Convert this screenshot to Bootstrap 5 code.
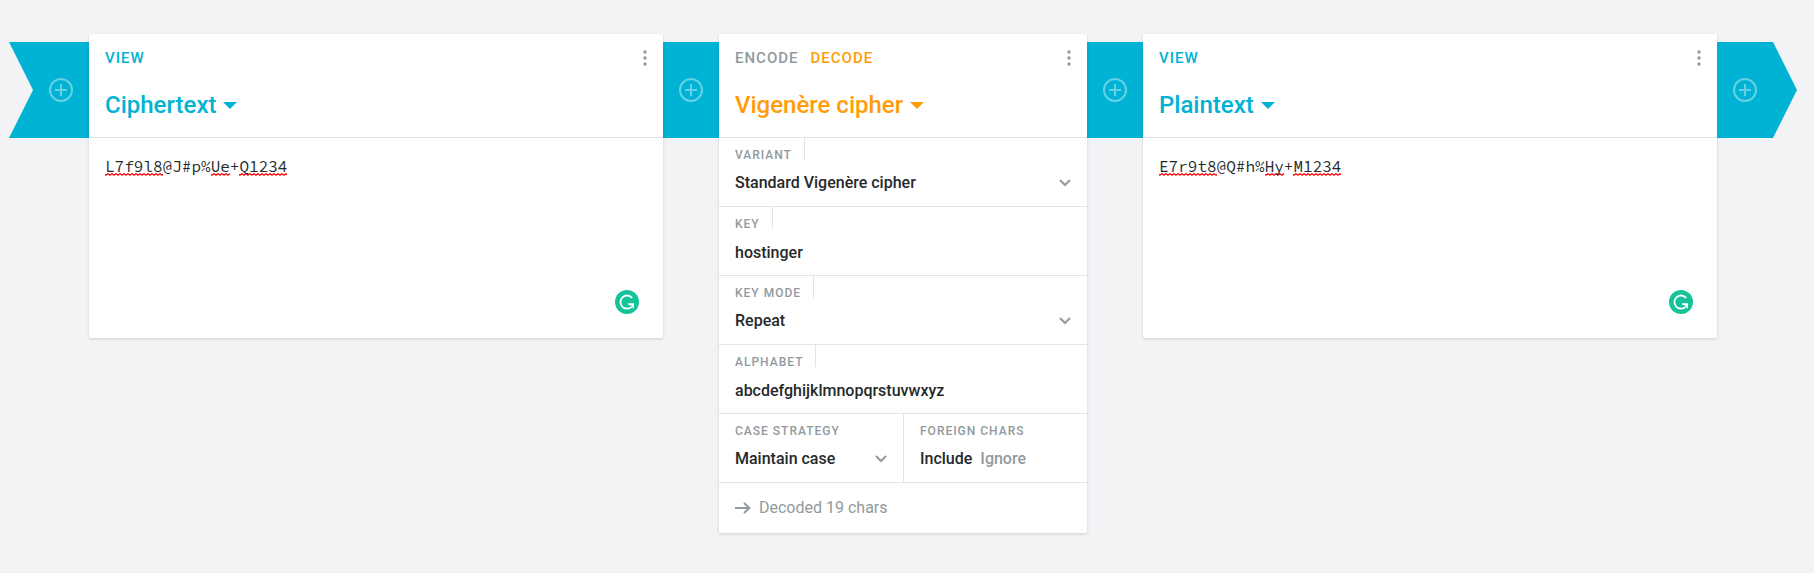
<!DOCTYPE html>
<html lang="en">
<head>
<meta charset="utf-8">
<meta name="viewport" content="width=device-width, initial-scale=1">
<title>Vigenère cipher</title>
<link href="https://cdn.jsdelivr.net/npm/bootstrap@5.3.0/dist/css/bootstrap.min.css" rel="stylesheet">
<style>
:root{--flow:#00b2d4;--accent:#ff9c07;--muted:#919a9e;--line:#e1e5e9}
body{background:#f2f3f5;font-family:Roboto,sans-serif;color:#26292b;font-size:16px;line-height:24px;min-height:573px;overflow:hidden}
.pipeline{padding:34px 17px 0 9px}
.brick{background:#fff;border-radius:2px;box-shadow:0 1px 3px rgba(25,35,45,.18);position:relative}
.brick-view{width:574px;height:304px}
.brick-coder{width:368px;height:499px}
.link-pipe{background:var(--flow);width:56px;height:96px;margin-top:8px;color:rgba(255,255,255,.4)}
.pipe-start,.pipe-end{width:80px}
.pipe-start{clip-path:polygon(0 0,100% 0,100% 100%,0 100%,24px 50%);padding-left:24px}
.pipe-end{clip-path:polygon(0 0,56px 0,100% 50%,56px 100%,0 100%);padding-right:24px}
.brick-head{height:104px;padding:13px 13px 0 16px;border-bottom:1px solid var(--line)}
.modes{font-size:15px;font-weight:500;line-height:22px;letter-spacing:1px;gap:12px;color:var(--muted)}
.brick-title{font-size:24px;font-weight:500;line-height:32px;margin:20px 0 0;gap:7px}
.brick-title svg{margin-top:1px}
.tone-flow{color:var(--flow)}
.tone-accent{color:var(--accent)}
.tone-muted,.brick svg.tone-muted{color:var(--muted)}
.dots{margin:3px 3px 0 0}
.editor{font:16px/24px "Source Code Pro","Liberation Mono",monospace;padding:16px;white-space:pre}
.typo{display:inline-block;height:24px;vertical-align:top;background:url("data:image/svg+xml,%3Csvg xmlns='http://www.w3.org/2000/svg' width='4' height='3'%3E%3Cpath d='M-1 .6L1 2.2 3 .6 5 2.2' fill='none' stroke='%23f00' stroke-width='1.2'/%3E%3C/svg%3E") 0 19px repeat-x}
.helper{position:absolute;right:24px;bottom:24px}
.field{height:69px;border-bottom:1px solid var(--line);padding-left:16px}
.field-label{font-size:12px;font-weight:500;line-height:22px;height:22px;letter-spacing:1px;color:var(--muted);padding:6px 12px 0 0;width:max-content}
.field-label.edge{border-right:1px solid var(--line)}
.field-value{font-weight:500;padding-right:16px;margin-top:11px}
.field-value.typed{margin-top:12px}
.field-half{width:184px}
.field-half + .field-half{border-left:1px solid var(--line)}
.field-value.pair{gap:8px}
.result{height:50px;padding-left:16px;gap:8px;color:var(--muted)}
</style>
</head>
<body>
<svg class="d-none">
  <symbol id="plus" viewBox="0 0 24 24"><g fill="none" stroke="currentColor" stroke-width="2"><circle cx="12" cy="12" r="11"/><path d="M12 6v12M6 12h12"/></g></symbol>
  <symbol id="more" viewBox="0 0 4 16"><g fill="currentColor"><circle cx="2" cy="2" r="1.7"/><circle cx="2" cy="8" r="1.7"/><circle cx="2" cy="14" r="1.7"/></g></symbol>
  <symbol id="caret" viewBox="0 0 14 7"><path d="M0 0h14L7 7z" fill="currentColor"/></symbol>
  <symbol id="chev" viewBox="0 0 12 8"><path d="M1 1l5 5 5-5" fill="none" stroke="currentColor" stroke-width="2"/></symbol>
  <symbol id="helper" viewBox="0 0 24 24"><circle cx="12" cy="12" r="12" fill="#15c39a"/><path d="M17.2 8A6.6 6.6 0 1 0 16.6 16.9" fill="none" stroke="#fff" stroke-width="1.8"/><path d="M13.2 13.2h5.8v5.6l-2-1.9-1.6-1.9h-2.2z" fill="#fff"/></symbol>
</svg>
<main class="pipeline d-flex align-items-start">
  <div class="link-pipe pipe-start d-flex align-items-center justify-content-center flex-shrink-0"><svg width="24" height="24"><use href="#plus"/></svg></div>

  <section class="brick brick-view flex-shrink-0">
    <header class="brick-head">
      <div class="d-flex justify-content-between align-items-start"><div class="modes d-flex"><span class="tone-flow">VIEW</span></div><svg class="dots tone-muted" width="4" height="16"><use href="#more"/></svg></div>
      <h2 class="brick-title tone-flow d-flex align-items-center">Ciphertext<svg width="14" height="7"><use href="#caret"/></svg></h2>
    </header>
    <div class="editor"><span class="typo">L7f9l8</span>@J#p%<span class="typo">Ue</span>+<span class="typo">Q1234</span></div>
    <svg class="helper" width="24" height="24"><use href="#helper"/></svg>
  </section>

  <div class="link-pipe d-flex align-items-center justify-content-center flex-shrink-0"><svg width="24" height="24"><use href="#plus"/></svg></div>

  <section class="brick brick-coder flex-shrink-0">
    <header class="brick-head">
      <div class="d-flex justify-content-between align-items-start"><div class="modes d-flex"><span>ENCODE</span><span class="tone-accent">DECODE</span></div><svg class="dots tone-muted" width="4" height="16"><use href="#more"/></svg></div>
      <h2 class="brick-title tone-accent d-flex align-items-center">Vigenère cipher<svg width="14" height="7"><use href="#caret"/></svg></h2>
    </header>
    <div class="field"><div class="field-label edge">VARIANT</div><div class="field-value d-flex justify-content-between align-items-center">Standard Vigenère cipher<svg class="tone-muted" width="12" height="8"><use href="#chev"/></svg></div></div>
    <div class="field"><div class="field-label edge">KEY</div><div class="field-value typed">hostinger</div></div>
    <div class="field"><div class="field-label edge">KEY MODE</div><div class="field-value d-flex justify-content-between align-items-center">Repeat<svg class="tone-muted" width="12" height="8"><use href="#chev"/></svg></div></div>
    <div class="field"><div class="field-label edge">ALPHABET</div><div class="field-value typed">abcdefghijklmnopqrstuvwxyz</div></div>
    <div class="d-flex">
      <div class="field field-half"><div class="field-label">CASE STRATEGY</div><div class="field-value d-flex justify-content-between align-items-center">Maintain case<svg class="tone-muted" width="12" height="8"><use href="#chev"/></svg></div></div>
      <div class="field field-half"><div class="field-label">FOREIGN CHARS</div><div class="field-value pair d-flex"><span>Include</span><span class="tone-muted">Ignore</span></div></div>
    </div>
    <div class="result d-flex align-items-center"><svg width="16" height="12" viewBox="0 0 16 12"><path d="M0 6h14.5M9 .9L14.4 6 9 11.1" fill="none" stroke="currentColor" stroke-width="2"/></svg>Decoded 19 chars</div>
  </section>

  <div class="link-pipe d-flex align-items-center justify-content-center flex-shrink-0"><svg width="24" height="24"><use href="#plus"/></svg></div>

  <section class="brick brick-view flex-shrink-0">
    <header class="brick-head">
      <div class="d-flex justify-content-between align-items-start"><div class="modes d-flex"><span class="tone-flow">VIEW</span></div><svg class="dots tone-muted" width="4" height="16"><use href="#more"/></svg></div>
      <h2 class="brick-title tone-flow d-flex align-items-center">Plaintext<svg width="14" height="7"><use href="#caret"/></svg></h2>
    </header>
    <div class="editor"><span class="typo">E7r9t8</span>@Q#h%<span class="typo">Hy</span>+<span class="typo">M1234</span></div>
    <svg class="helper" width="24" height="24"><use href="#helper"/></svg>
  </section>

  <div class="link-pipe pipe-end d-flex align-items-center justify-content-center flex-shrink-0"><svg width="24" height="24"><use href="#plus"/></svg></div>
</main>
<script src="https://cdn.jsdelivr.net/npm/bootstrap@5.3.0/dist/js/bootstrap.bundle.min.js"></script>
</body>
</html>
